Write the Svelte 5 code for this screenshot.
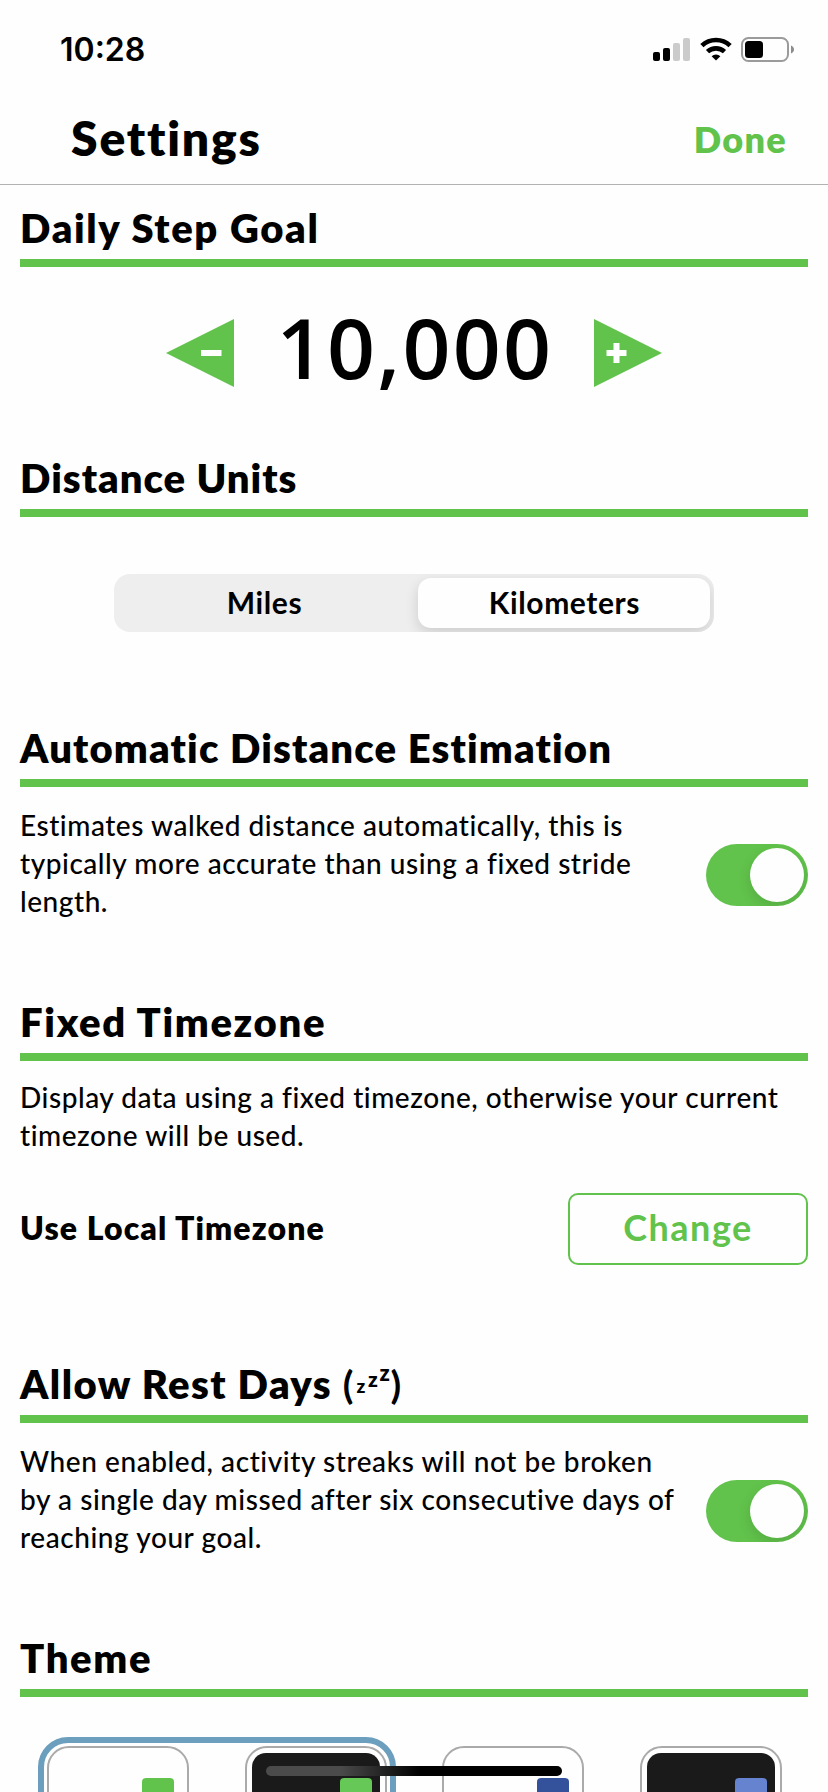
<script>
    let goal = 10000;
    let unit = "Kilometers";
    let autoDistance = true;
    let restDays = true;

    const units = ["Miles", "Kilometers"];

    // phone previews, two per theme (light and dark)
    const themes = [
        { name: "green", selected: true, light: "#61c34b", dark: "#66c957" },
        { name: "blue", selected: false, light: "#34519b", dark: "#6583cf" },
    ];

    const bars = [9, 13, 18, 23];

    $: goalText = goal.toLocaleString("en-US");
</script>

<main class="screen">
    <div class="status">
        <span class="clock">10:28</span>
        <div class="icons">
            <svg class="signal" width="37" height="23" viewBox="0 0 37 23">
                {#each bars as h, i}
                    <rect x={i * 10} y={23 - h} width="7" height={h} rx="2" fill={i < 2 ? "#000" : "#cbcbcb"} />
                {/each}
            </svg>
            <svg class="wifi" width="32" height="24" viewBox="0 0 32 24">
                <g fill="none" stroke="#000" stroke-width="4.6">
                    <path d="M1.9 8.7a20.3 20.3 0 0 1 28.2 0" />
                    <path d="M7.5 14.7a12.4 12.4 0 0 1 17 0" />
                </g>
                <path d="M16 23.6l-4.4-4.4a6.3 6.3 0 0 1 8.8 0z" />
            </svg>
            <svg class="battery" width="54" height="26" viewBox="0 0 54 26">
                <rect x="1" y="1" width="46" height="23" rx="6.5" fill="none" stroke="#9b9b9b" stroke-width="2" />
                <rect x="4" y="4" width="18" height="17" rx="3.5" />
                <path d="M50 8.5c4 1.500 4 6.500 0 8z" fill="#8c8c8c" />
            </svg>
        </div>
    </div>

    <header class="navbar">
        <h1>Settings</h1>
        <button class="done">Done</button>
    </header>

    <section class="goal">
        <h2>Daily Step Goal</h2>
        <div class="stepper">
            <button class="arrow" aria-label="Decrease" on:click={() => (goal -= 500)}>
                <svg width="68" height="68" viewBox="0 0 68 68">
                    <path d="M0 34L68 0V68z" fill="#61c34b" />
                    <path d="M35 31h20.500v6H35z" fill="#fff" />
                </svg>
            </button>
            <span class="steps">{goalText}</span>
            <button class="arrow" aria-label="Increase" on:click={() => (goal += 500)}>
                <svg width="68" height="68" viewBox="0 0 68 68">
                    <path d="M68 34L0 0V68z" fill="#61c34b" />
                    <path d="M12.500 31h7v-7h6v7h7v6h-7v7h-6v-7h-7z" fill="#fff" />
                </svg>
            </button>
        </div>
    </section>

    <section class="units">
        <h2>Distance Units</h2>
        <div class="segmented">
            {#each units as u}
                <button class="segment" class:active={u === unit} on:click={() => (unit = u)}>{u}</button>
            {/each}
        </div>
    </section>

    <section class="estimation">
        <h2>Automatic Distance Estimation</h2>
        <div class="option">
            <p>
                Estimates walked distance automatically, this is<br />
                typically more accurate than using a fixed stride<br />
                length.
            </p>
            <button
                class="toggle"
                class:on={autoDistance}
                aria-label="Automatic Distance Estimation"
                on:click={() => (autoDistance = !autoDistance)}
            >
                <span class="knob"></span>
            </button>
        </div>
    </section>

    <section class="timezone">
        <h2>Fixed Timezone</h2>
        <p>
            Display data using a fixed timezone, otherwise your current<br />
            timezone will be used.
        </p>
        <div class="zone">
            <strong>Use Local Timezone</strong>
            <button class="change">Change</button>
        </div>
    </section>

    <section class="rest">
        <h2>
            Allow Rest Days <span class="paren">(</span><span class="zzz"><i>z</i><i>z</i><i>z</i></span><span
                class="paren">)</span
            >
        </h2>
        <div class="option">
            <p>
                When enabled, activity streaks will not be broken<br />
                by a single day missed after six consecutive days of<br />
                reaching your goal.
            </p>
            <button
                class="toggle"
                class:on={restDays}
                aria-label="Allow Rest Days"
                on:click={() => (restDays = !restDays)}
            >
                <span class="knob"></span>
            </button>
        </div>
    </section>

    <section class="theme">
        <h2>Theme</h2>
        <div class="themes">
            {#each themes as theme (theme.name)}
                <div class="pair" class:selected={theme.selected}>
                    <div class="card">
                        <div class="face"><span class="chip" style="background:{theme.light}"></span></div>
                    </div>
                    <div class="card">
                        <div class="face dark"><span class="chip" style="background:{theme.dark}"></span></div>
                    </div>
                </div>
            {/each}
        </div>
    </section>

    <div class="home-indicator"></div>
</main>

<style>
    :global(body) {
        margin: 0;
        background: #fefefe;
    }

    .screen {
        position: relative;
        display: flex;
        flex-direction: column;
        width: 828px;
        height: 1792px;
        overflow: hidden;
        box-sizing: border-box;
        background: #fefefe;
        color: #000;
        font-family: Lato, "Open Sans", sans-serif;
    }

    button {
        margin: 0;
        padding: 0;
        border: none;
        background: none;
        color: inherit;
        font-family: inherit;
    }

    svg {
        display: block;
    }

    .status {
        display: flex;
        flex: none;
        justify-content: space-between;
        box-sizing: border-box;
        height: 94px;
        padding: 30px 33px 0 60px;
    }

    .clock {
        font: 600 32px/39px Inter, sans-serif;
    }

    .icons {
        display: flex;
        align-items: flex-start;
        padding-top: 7px;
    }

    .signal {
        margin: 1px 10px 0 0;
    }

    .wifi {
        margin-right: 9px;
    }

    .navbar {
        display: flex;
        flex: none;
        align-items: center;
        justify-content: space-between;
        box-sizing: border-box;
        height: 91px;
        padding: 0 41px 0 71px;
        border-bottom: 1px solid #b2b2b2;
    }

    h1 {
        margin: 0;
        font-size: 48px;
        font-weight: 800;
        line-height: 56px;
        padding-bottom: 2px;
        letter-spacing: 1.8px;
    }

    .done {
        padding-bottom: 1px;
        color: #61c34b;
        font-size: 36px;
        font-weight: 800;
        letter-spacing: 1.3px;
    }

    section {
        flex: none;
        box-sizing: border-box;
        padding: 0 20px;
    }

    .goal {
        height: 250px;
        margin-top: 14px;
    }

    .units {
        height: 270px;
    }

    .estimation {
        height: 274px;
    }

    .timezone {
        height: 362px;
    }

    .rest {
        height: 274px;
    }

    h2 {
        box-sizing: border-box;
        height: 68px;
        margin: 0;
        border-bottom: 8px solid #61c34b;
        font-size: 40px;
        font-weight: 800;
        line-height: 58px;
        letter-spacing: 1.65px;
        white-space: nowrap;
    }

    .units h2 {
        letter-spacing: 1px;
    }

    .estimation h2 {
        letter-spacing: 1.15px;
    }

    .rest h2 {
        letter-spacing: 1.4px;
    }

    .stepper {
        display: flex;
        align-items: center;
        justify-content: space-between;
        width: 496px;
        margin: 32px auto 0;
        height: 108px;
    }

    .steps {
        padding: 0 0 12px 2px;
        font: 600 84px/96px "Open Sans", sans-serif;
        letter-spacing: 2.3px;
    }

    .segmented {
        display: grid;
        grid-template-columns: 292px 292px;
        justify-content: space-between;
        box-sizing: border-box;
        width: 600px;
        height: 58px;
        margin: 57px auto 0;
        padding: 4px;
        border-radius: 16px;
        background: #eeeeef;
        overflow: hidden;
    }

    .segment {
        padding: 0 0 2px 1px;
        border-radius: 13px;
        font-size: 30px;
        font-weight: 700;
        line-height: 48px;
        letter-spacing: 0.6px;
    }

    .segment.active {
        background: #fefefe;
        box-shadow: 0 5px 14px rgba(0, 0, 0, 0.14);
    }

    p {
        margin: 0;
        font-size: 28px;
        font-weight: 500;
        line-height: 38px;
        letter-spacing: 0.54px;
        white-space: nowrap;
    }

    .rest p {
        letter-spacing: 0.57px;
    }

    .option {
        display: flex;
        justify-content: space-between;
        padding-top: 19px;
    }

    .toggle {
        display: flex;
        box-sizing: border-box;
        width: 102px;
        height: 62px;
        margin-top: 38px;
        padding: 4px;
        border-radius: 31px;
        background: #d9d9d9;
        overflow: hidden;
    }

    .toggle.on {
        justify-content: flex-end;
        background: #61c34b;
    }

    .knob {
        width: 54px;
        height: 54px;
        border-radius: 50%;
        background: #fefefe;
        box-shadow: 0 5px 14px rgba(0, 0, 0, 0.12);
    }

    .timezone p {
        padding-top: 17px;
    }

    .zone {
        display: flex;
        align-items: center;
        justify-content: space-between;
        margin-top: 39px;
    }

    strong {
        padding-bottom: 4px;
        font-size: 32px;
        font-weight: 800;
        letter-spacing: 1.1px;
    }

    .change {
        box-sizing: border-box;
        width: 240px;
        height: 72px;
        padding-bottom: 4px;
        border: 2px solid #61c34b;
        border-radius: 10px;
        color: #61c34b;
        font-size: 36px;
        font-weight: 700;
        letter-spacing: 1.5px;
    }

    .paren {
        font-size: 39px;
        font-weight: 700;
        letter-spacing: 0;
    }

    .zzz {
        margin: 0 1px 0 3px;
    }

    .zzz i {
        display: inline-block;
        width: 11.5px;
        font-family: "Open Sans", sans-serif;
        font-size: 18px;
        font-style: normal;
        font-weight: 700;
        line-height: 1;
        letter-spacing: 0;
        vertical-align: 6px;
    }

    .zzz i:nth-child(2) {
        font-size: 20px;
        vertical-align: 12px;
    }

    .zzz i:nth-child(3) {
        width: 10px;
        font-size: 21px;
        vertical-align: 18px;
    }

    .themes {
        display: flex;
        gap: 37px;
        margin: 40px 0 0 18px;
    }

    .pair {
        display: flex;
        flex: none;
        gap: 56px;
        box-sizing: border-box;
        height: 240px;
        padding: 3px;
        border: 6px solid transparent;
        border-radius: 30px;
    }

    .pair.selected {
        border-color: #6c9ebd;
    }

    .card {
        box-sizing: border-box;
        width: 142px;
        padding: 5px;
        border: 2px solid #aaa;
        border-radius: 22px;
    }

    .face {
        display: flex;
        justify-content: flex-end;
        box-sizing: border-box;
        width: 128px;
        height: 200px;
        padding: 25px 8px 0 0;
        border-radius: 14px;
    }

    .face.dark {
        background: #1a1a1a;
    }

    .chip {
        width: 32px;
        height: 60px;
        border-radius: 4px;
    }

    .home-indicator {
        position: absolute;
        left: 266px;
        bottom: 16px;
        width: 296px;
        height: 10px;
        border-radius: 5px;
        background: linear-gradient(90deg, #4b4b4b 25%, #000 52%);
    }
</style>
